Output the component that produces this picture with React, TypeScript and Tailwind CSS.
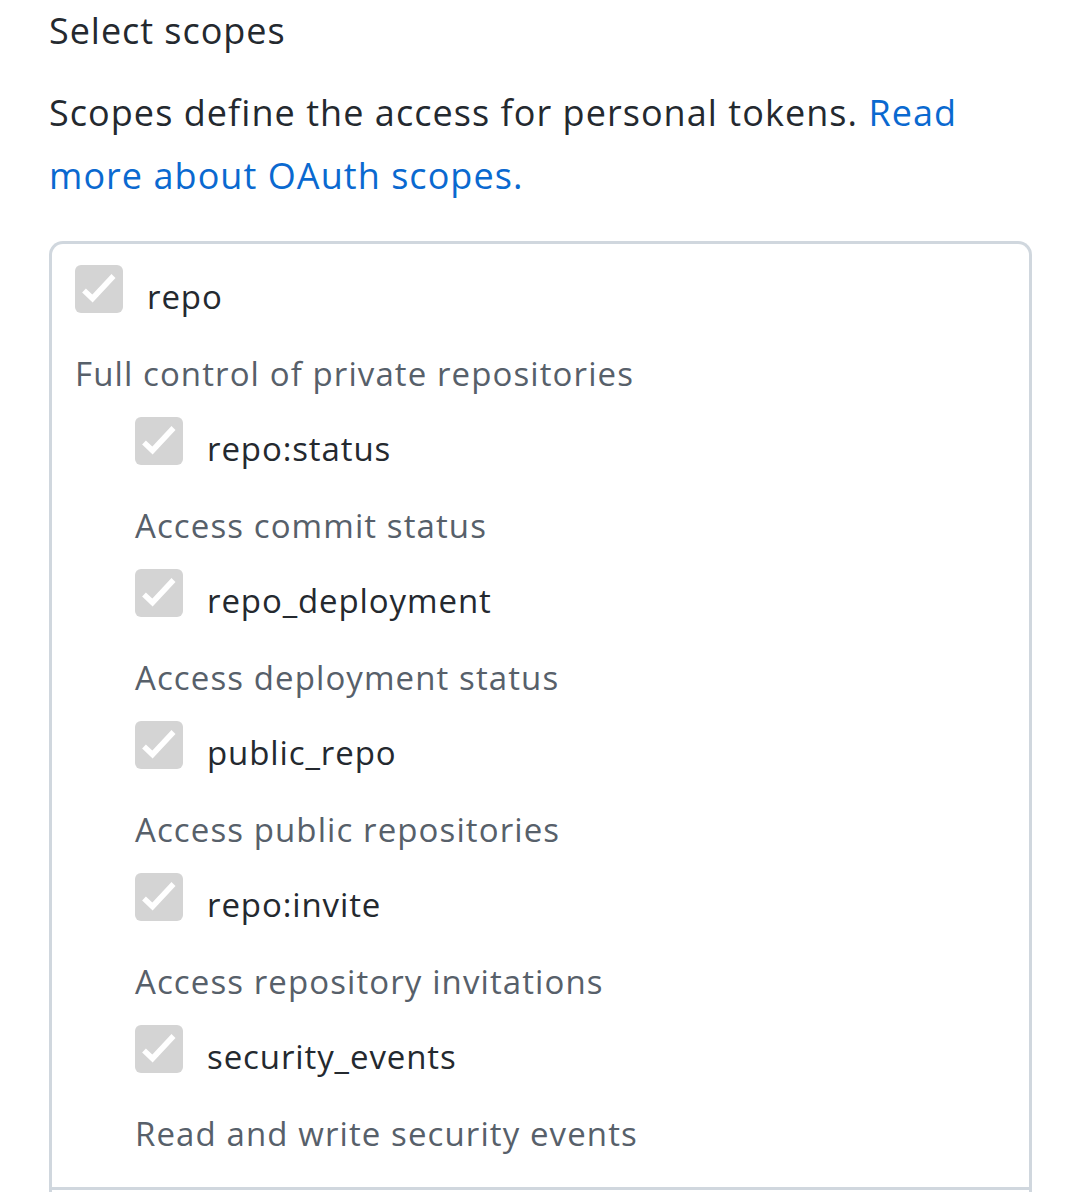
import React from "react";

const font = { fontFamily: "'Open Sans', Lato, sans-serif" };

function Check() {
  return (
    <div className="w-[48px] h-[48px] rounded-[6px] bg-[#d4d4d4] shrink-0">
      <svg width="48" height="48" viewBox="0 0 48 48" fill="none" stroke="#ffffff" strokeWidth="5.5" strokeLinecap="butt" strokeLinejoin="miter">
        <path d="M9 25.5l8.5 8L38.5 11" />
      </svg>
    </div>
  );
}

function Item({ label, desc }: { label: string; desc: string }) {
  return (
    <div className="flex flex-col">
      <div className="flex items-center h-[48px] gap-[24px]">
        <Check />
        <span className="text-[33px] text-[#24292f] mt-[16px] tracking-[0.9px] whitespace-pre">{label}</span>
      </div>
      <div className="h-[48px] leading-[48px] mt-[37px] text-[33px] text-[#57606a] mb-[19px] tracking-[1.1px] whitespace-nowrap">{desc}</div>
    </div>
  );
}

const subs = [
  ["repo:status", "Access commit status"],
  ["repo_deployment", "Access deployment status"],
  ["public_repo", "Access public repositories"],
  ["repo:invite", "Access repository invitations"],
  ["security_events", "Read and write security events"],
];

export default function App() {
  return (
    <div className="w-[1080px] h-[1192px] bg-white overflow-hidden" style={font}>
      <div className="pl-[49px] pr-[49px]">
        <div className="text-[36px] text-[#24292f] leading-[64px] h-[64px] -mt-[1px] tracking-[0.95px]">Select scopes</div>
        <p className="text-[36px] text-[#24292f] leading-[63px] mt-[18px] tracking-[1.05px]">
          Scopes define the access for personal tokens.{" "}
          <a className="text-[#0a69d0]">Read more about OAuth scopes.</a>
        </p>
        <div className="mt-[34px] border-[3px] border-[#d0d7de] rounded-[14px] border-b-0 rounded-b-none w-[983px]">
          <div className="pt-[21px] pl-[23px] border-b-[3px] border-[#d0d7de] h-[946px]">
            <Item label="repo" desc="Full control of private repositories" />
            <div className="pl-[60px]">
              {subs.map(([l, d]) => (
                <Item key={l} label={l} desc={d} />
              ))}
            </div>
          </div>
          <div className="h-[40px]" />
        </div>
      </div>
    </div>
  );
}
